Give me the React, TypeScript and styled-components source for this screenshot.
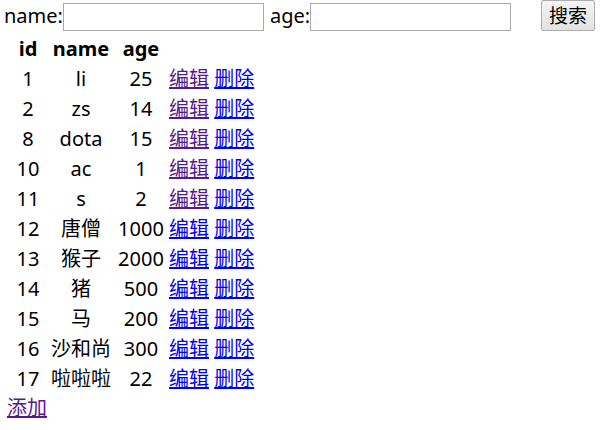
import React from "react";
import styled, { createGlobalStyle } from "styled-components";

type Row = { id: number; name: string; age: number; visited: boolean };

const rows: Row[] = [
  { id: 1, name: "li", age: 25, visited: true },
  { id: 2, name: "zs", age: 14, visited: true },
  { id: 8, name: "dota", age: 15, visited: true },
  { id: 10, name: "ac", age: 1, visited: true },
  { id: 11, name: "s", age: 2, visited: true },
  { id: 12, name: "唐僧", age: 1000, visited: false },
  { id: 13, name: "猴子", age: 2000, visited: false },
  { id: 14, name: "猪", age: 500, visited: false },
  { id: 15, name: "马", age: 200, visited: false },
  { id: 16, name: "沙和尚", age: 300, visited: false },
  { id: 17, name: "啦啦啦", age: 22, visited: false },
];

const GlobalStyle = createGlobalStyle`
  body {
    margin: 0;
    background: #fff;
    color: #000;
    font-family: "Noto Sans", "Noto Sans CJK SC", sans-serif;
    font-size: 20px;
    line-height: 26px;
  }
`;

const Page = styled.div`
  display: flex;
  flex-direction: column;
`;

const SearchBar = styled.form`
  display: flex;
  align-items: center;
  height: 32px;
  padding-left: 4px;
  margin: 0;
`;

const Label = styled.label`
  display: flex;
  align-items: center;
  margin-right: 6px;
`;

const TextInput = styled.input`
  box-sizing: border-box;
  width: 201px;
  height: 28px;
  margin: 2px 0 0;
  border: 1px solid #a9a9a9;
  padding: 1px 3px;
  font: inherit;
  font-size: 16px;
  outline: none;
`;

const SearchButton = styled.button`
  box-sizing: border-box;
  width: 54px;
  height: 31px;
  margin-left: 24px;
  margin-top: -1px;
  padding: 0;
  border: 1px solid #adadad;
  border-radius: 2px;
  background: linear-gradient(#f4f4f4, #e2e2e2);
  color: #000;
  font: inherit;
  font-size: 19px;
  line-height: 26px;
`;

const Table = styled.table`
  margin: 1px 0 0 8px;
  border-spacing: 2px;
`;

const Head = styled.th<{ $w?: number }>`
  padding: 1px;
  height: 26px;
  width: ${(p) => (p.$w ? `${p.$w}px` : "auto")};
  font-weight: bold;
  text-align: center;
`;

const Cell = styled.td`
  padding: 1px;
  height: 26px;
  text-align: center;
  white-space: nowrap;
`;

const ActionCell = styled.td`
  padding: 1px;
  height: 26px;
  white-space: nowrap;
`;

const Link = styled.a<{ $visited?: boolean }>`
  display: inline-block;
  height: 26px;
  line-height: 26px;
  vertical-align: top;
  color: ${(p) => (p.$visited ? "#551a8b" : "#0000ee")};
  text-decoration: underline;
  cursor: pointer;
`;

const AddLink = styled(Link)`
  margin-left: 7px;
  align-self: flex-start;
`;

export default function App() {
  return (
    <Page>
      <GlobalStyle />
      <SearchBar onSubmit={(e) => e.preventDefault()}>
        <Label>
          name:
          <TextInput type="text" />
        </Label>
        <Label>
          age:
          <TextInput type="text" />
        </Label>
        <SearchButton type="submit">搜索</SearchButton>
      </SearchBar>
      <Table>
        <thead>
          <tr>
            <Head $w={34}>id</Head>
            <Head $w={64}>name</Head>
            <Head $w={48}>age</Head>
            <Head></Head>
          </tr>
        </thead>
        <tbody>
          {rows.map((r) => (
            <tr key={r.id}>
              <Cell>{r.id}</Cell>
              <Cell>{r.name}</Cell>
              <Cell>{r.age}</Cell>
              <ActionCell>
                <Link $visited={r.visited}>编辑</Link> <Link>删除</Link>
              </ActionCell>
            </tr>
          ))}
        </tbody>
      </Table>
      <AddLink $visited>添加</AddLink>
    </Page>
  );
}
